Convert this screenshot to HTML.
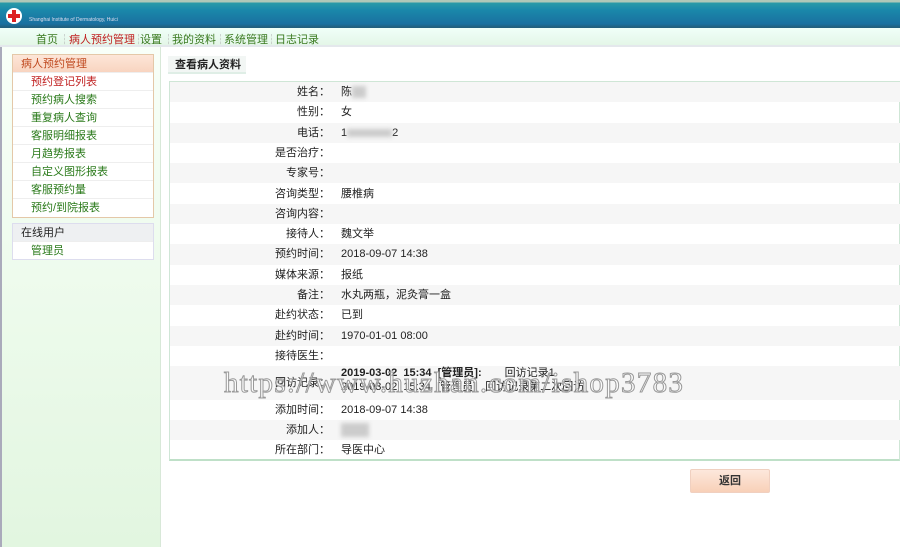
<!DOCTYPE html>
<html><head><meta charset="utf-8"><style>
*{margin:0;padding:0;box-sizing:border-box}
body{width:900px;height:547px;overflow:hidden;background:#fff;font-family:"Liberation Sans","Noto Sans CJK SC",sans-serif;font-size:11px;color:#222;position:relative}
.abs{position:absolute}
#top{left:0;top:0;width:900px;height:28px;background:linear-gradient(#b0c8b8 0,#b0c8b8 2px,#2a9aa8 3px,#1a88aa 10px,#1a70a0 24px,#22607e 27px)}
#nav{left:0;top:28px;width:900px;height:19px;background:linear-gradient(#f0fff8,#e4f6e8);border-bottom:2px solid #e4e8ec}
#nav span{position:absolute;top:3px;font-size:11px;color:#3a7a20}
#side{left:0;top:47px;width:161px;height:500px;background:linear-gradient(#f8fff8,#e2f6e0);border-left:2px solid #aab;border-right:1px solid #d8e8d8}
.box{position:absolute;left:12px;width:142px;background:#fff;border:1px solid #e4c8a8}
.box div{height:18px;line-height:18px;padding-left:18px;color:#2a7a1a;border-bottom:1px solid #eee}
.row{position:absolute;left:170px;width:730px;height:20.3px;line-height:20px}
.row .l{position:absolute;right:570px;white-space:nowrap}
.row .v{position:absolute;left:171px;white-space:nowrap}
.g{background:#f6f6f6}
.blur{display:inline-block;background:#ccc;filter:blur(2px);vertical-align:middle}
</style></head><body>
<div id="top" class="abs">
<div class="abs" style="left:6px;top:8px;width:16px;height:16px;border-radius:50%;background:#fff"></div>
<div class="abs" style="left:12px;top:10px;width:4px;height:12px;background:#d22"></div>
<div class="abs" style="left:8px;top:14px;width:12px;height:4px;background:#d22"></div>
<div class="abs" style="left:29px;top:17px;font-size:5px;color:#dde">Shanghai Institute of Dermatology, Huici</div>
</div>
<div id="nav" class="abs">
<span style="left:36px">首页</span><span style="left:59px;color:#aaa">┆</span>
<span style="left:69px;color:#c02020">病人预约管理</span><span style="left:133px;color:#aaa">┆</span>
<span style="left:140px">设置</span><span style="left:163px;color:#aaa">┆</span>
<span style="left:172px">我的资料</span><span style="left:215px;color:#aaa">┆</span>
<span style="left:224px">系统管理</span><span style="left:266px;color:#aaa">┆</span>
<span style="left:275px">日志记录</span>
</div>
<div id="side" class="abs"></div>
<div class="box" style="top:54px;height:164px">
<div style="background:linear-gradient(#fde6d8,#f8d4c0);padding-left:8px;color:#c04a20">病人预约管理</div>
<div style="color:#c02020">预约登记列表</div><div>预约病人搜索</div><div>重复病人查询</div><div>客服明细报表</div><div>月趋势报表</div><div>自定义图形报表</div><div>客服预约量</div><div style="border:0">预约/到院报表</div>
</div>
<div class="box" style="top:223px;height:37px;border-color:#dde">
<div style="background:#eef0f2;padding-left:8px;color:#222">在线用户</div><div style="border:0">管理员</div>
</div>
<div class="abs" style="left:168px;top:56px;width:78px;height:18px;background:#f2f6f4;border-bottom:2px solid #dfeee6;padding-left:7px;line-height:18px;font-weight:bold">查看病人资料</div>
<div class="abs" style="left:169px;top:81px;width:731px;height:380px;border:1px solid #cfe6d6;border-bottom:2px solid #bfe0c8"></div>
<div class="row g" style="top:82px"><span class="l">姓名：</span><span class="v">陈<span class="blur" style="width:14px;height:12px"></span></span></div>
<div class="row" style="top:102.3px"><span class="l">性别：</span><span class="v">女</span></div>
<div class="row g" style="top:122.6px"><span class="l">电话：</span><span class="v">1<span class="blur" style="width:45px;height:8px"></span>2</span></div>
<div class="row" style="top:142.9px"><span class="l">是否治疗：</span></div>
<div class="row g" style="top:163.2px"><span class="l">专家号：</span></div>
<div class="row" style="top:183.5px"><span class="l">咨询类型：</span><span class="v">腰椎病</span></div>
<div class="row g" style="top:203.8px"><span class="l">咨询内容：</span></div>
<div class="row" style="top:224.1px"><span class="l">接待人：</span><span class="v">魏文举</span></div>
<div class="row g" style="top:244.4px"><span class="l">预约时间：</span><span class="v">2018-09-07 14:38</span></div>
<div class="row" style="top:264.7px"><span class="l">媒体来源：</span><span class="v">报纸</span></div>
<div class="row g" style="top:285px"><span class="l">备注：</span><span class="v">水丸两瓶，泥灸膏一盒</span></div>
<div class="row" style="top:305.3px"><span class="l">赴约状态：</span><span class="v">已到</span></div>
<div class="row g" style="top:325.6px"><span class="l">赴约时间：</span><span class="v">1970-01-01 08:00</span></div>
<div class="row" style="top:345.9px"><span class="l">接待医生：</span></div>
<div class="row g" style="top:366.2px;height:34px"><span class="l" style="top:7px">回访记录：</span>
<span class="v" style="top:-3px;font-weight:bold">2019-03-02 &nbsp;15:34 &nbsp;[管理员]: <span style="font-weight:normal;margin-left:20px">回访记录1</span></span>
<span class="v" style="top:11px">2019-03-02 &nbsp;15:34 &nbsp;[管理员] &nbsp;&nbsp;回访记录第二次回访</span></div>
<div class="row" style="top:400px"><span class="l">添加时间：</span><span class="v">2018-09-07 14:38</span></div>
<div class="row g" style="top:420px"><span class="l">添加人：</span><span class="v"><span class="blur" style="width:28px;height:14px"></span></span></div>
<div class="row" style="top:440px"><span class="l">所在部门：</span><span class="v">导医中心</span></div>
<div class="abs" style="left:224px;top:367px;font-family:'Liberation Serif',serif;font-size:29px;color:rgba(255,255,255,.6);-webkit-text-stroke:1px #999;letter-spacing:1.3px;white-space:nowrap">https://www.huzhan.com/ishop3783</div>
<div class="abs" style="left:690px;top:469px;width:80px;height:24px;border-radius:2px;background:linear-gradient(#fde8dc,#f8d0b8);border:1px solid #f0d0c0;text-align:center;line-height:22px;font-weight:bold;color:#333">返回</div>
</body></html>
